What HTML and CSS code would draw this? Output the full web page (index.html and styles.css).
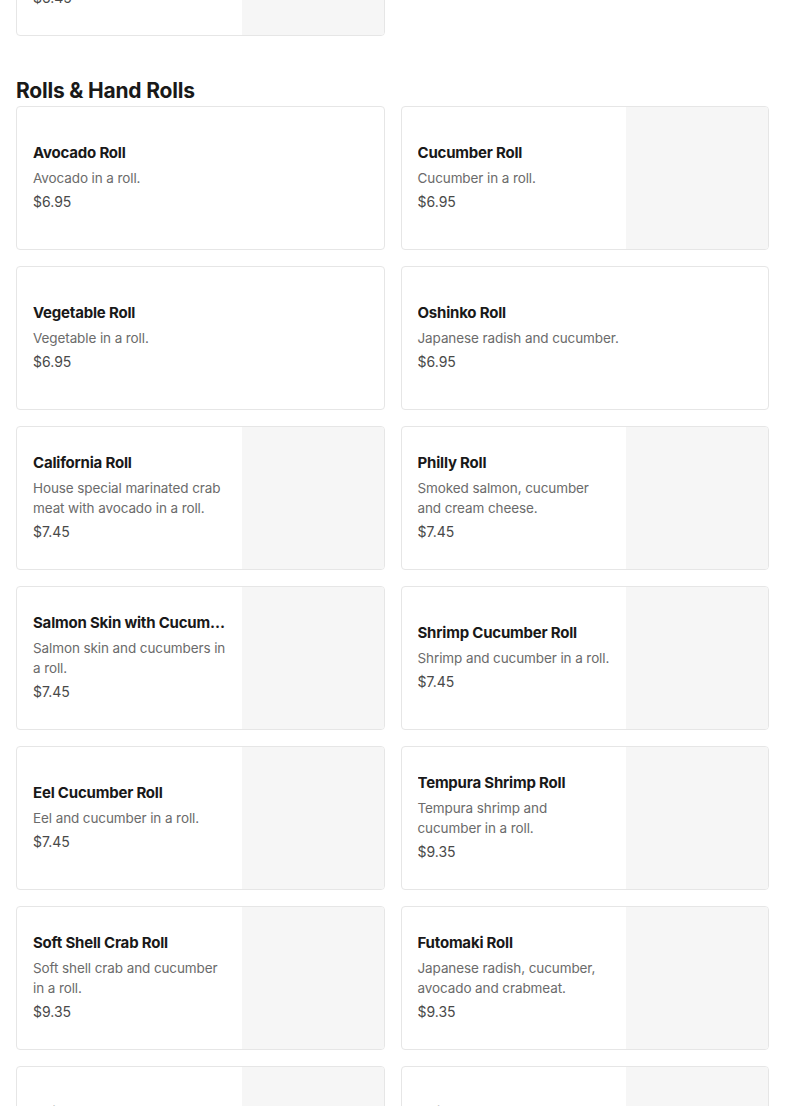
FILE: index.html
```html
<!DOCTYPE html>
<html lang="en">
<head>
<meta charset="utf-8">
<title>Menu</title>
<link rel="stylesheet" href="styles.css">
</head>
<body>
<main class="menu">
  <section class="section section-prev">
    <div class="grid">
      <article class="card">
        <div class="info">
          <h3 class="name">Seaweed Salad</h3>
          <p class="desc">Marinated seaweed salad with sesame seeds.</p>
          <p class="price">$6.45</p>
        </div>
        <div class="thumb"></div>
      </article>
    </div>
  </section>

  <section class="section">
    <h2 class="section-title">Rolls &amp; Hand Rolls</h2>
    <div class="grid">
      <article class="card">
        <div class="info">
          <h3 class="name">Avocado Roll</h3>
          <p class="desc">Avocado in a roll.</p>
          <p class="price">$6.95</p>
        </div>
      </article>
      <article class="card">
        <div class="info">
          <h3 class="name">Cucumber Roll</h3>
          <p class="desc">Cucumber in a roll.</p>
          <p class="price">$6.95</p>
        </div>
        <div class="thumb"></div>
      </article>
      <article class="card">
        <div class="info">
          <h3 class="name">Vegetable Roll</h3>
          <p class="desc">Vegetable in a roll.</p>
          <p class="price">$6.95</p>
        </div>
      </article>
      <article class="card">
        <div class="info">
          <h3 class="name">Oshinko Roll</h3>
          <p class="desc">Japanese radish and cucumber.</p>
          <p class="price">$6.95</p>
        </div>
      </article>
      <article class="card">
        <div class="info">
          <h3 class="name">California Roll</h3>
          <p class="desc">House special marinated crab meat with avocado in a roll.</p>
          <p class="price">$7.45</p>
        </div>
        <div class="thumb"></div>
      </article>
      <article class="card">
        <div class="info">
          <h3 class="name">Philly Roll</h3>
          <p class="desc">Smoked salmon, cucumber and cream cheese.</p>
          <p class="price">$7.45</p>
        </div>
        <div class="thumb"></div>
      </article>
      <article class="card">
        <div class="info">
          <h3 class="name">Salmon Skin with Cucumber Roll</h3>
          <p class="desc">Salmon skin and cucumbers in a roll.</p>
          <p class="price">$7.45</p>
        </div>
        <div class="thumb"></div>
      </article>
      <article class="card">
        <div class="info">
          <h3 class="name">Shrimp Cucumber Roll</h3>
          <p class="desc">Shrimp and cucumber in a roll.</p>
          <p class="price">$7.45</p>
        </div>
        <div class="thumb"></div>
      </article>
      <article class="card">
        <div class="info">
          <h3 class="name">Eel Cucumber Roll</h3>
          <p class="desc">Eel and cucumber in a roll.</p>
          <p class="price">$7.45</p>
        </div>
        <div class="thumb"></div>
      </article>
      <article class="card">
        <div class="info">
          <h3 class="name">Tempura Shrimp Roll</h3>
          <p class="desc">Tempura shrimp and cucumber in a roll.</p>
          <p class="price">$9.35</p>
        </div>
        <div class="thumb"></div>
      </article>
      <article class="card">
        <div class="info">
          <h3 class="name">Soft Shell Crab Roll</h3>
          <p class="desc">Soft shell crab and cucumber in a roll.</p>
          <p class="price">$9.35</p>
        </div>
        <div class="thumb"></div>
      </article>
      <article class="card">
        <div class="info">
          <h3 class="name">Futomaki Roll</h3>
          <p class="desc">Japanese radish, cucumber, avocado and crabmeat.</p>
          <p class="price">$9.35</p>
        </div>
        <div class="thumb"></div>
      </article>
      <article class="card">
        <div class="info">
          <h3 class="name">Spicy Tuna Roll</h3>
          <p class="desc">Spicy tuna in a roll.</p>
          <p class="price">$9.35</p>
        </div>
        <div class="thumb"></div>
      </article>
      <article class="card">
        <div class="info">
          <h3 class="name">Spicy Salmon Roll</h3>
          <p class="desc">Spicy salmon in a roll.</p>
          <p class="price">$9.35</p>
        </div>
        <div class="thumb"></div>
      </article>
    </div>
  </section>
</main>
</body>
</html>
```

FILE: styles.css
```css
* { box-sizing: border-box; }

html, body {
  margin: 0;
  padding: 0;
  background: #ffffff;
}

body {
  font-family: "Inter", "Noto Sans", "Liberation Sans", sans-serif;
  color: #191919;
  overflow: hidden;
}

.menu {
  padding: 0 16px;
  margin-top: -108px;
}

.section-prev {
  margin-bottom: 41px;
}

.section-title {
  margin: 0 0 1px;
  font-size: 21px;
  line-height: 28px;
  font-weight: 700;
  letter-spacing: -0.2px;
  color: #191919;
}

.grid {
  display: grid;
  grid-template-columns: 1fr 1fr;
  gap: 16px;
}

.card {
  display: flex;
  height: 144px;
  border: 1px solid #e6e6e6;
  border-radius: 4px;
  overflow: hidden;
  background: #fff;
}

.info {
  flex: 1;
  min-width: 0;
  padding: 0 16px 2px;
  display: flex;
  flex-direction: column;
  justify-content: center;
}

.thumb {
  flex: 0 0 142px;
  width: 142px;
  background: #f6f6f6;
}

.name {
  margin: 0 0 5px;
  font-size: 15px;
  line-height: 20px;
  font-weight: 700;
  letter-spacing: -0.2px;
  color: #191919;
  white-space: nowrap;
  overflow: hidden;
  text-overflow: ellipsis;
}

.desc {
  margin: 0 0 4px;
  font-size: 13.5px;
  line-height: 20px;
  color: #6b6b6b;
  letter-spacing: -0.1px;
}

.price {
  margin: 0;
  font-size: 14px;
  line-height: 20px;
  color: #494949;
}
```
